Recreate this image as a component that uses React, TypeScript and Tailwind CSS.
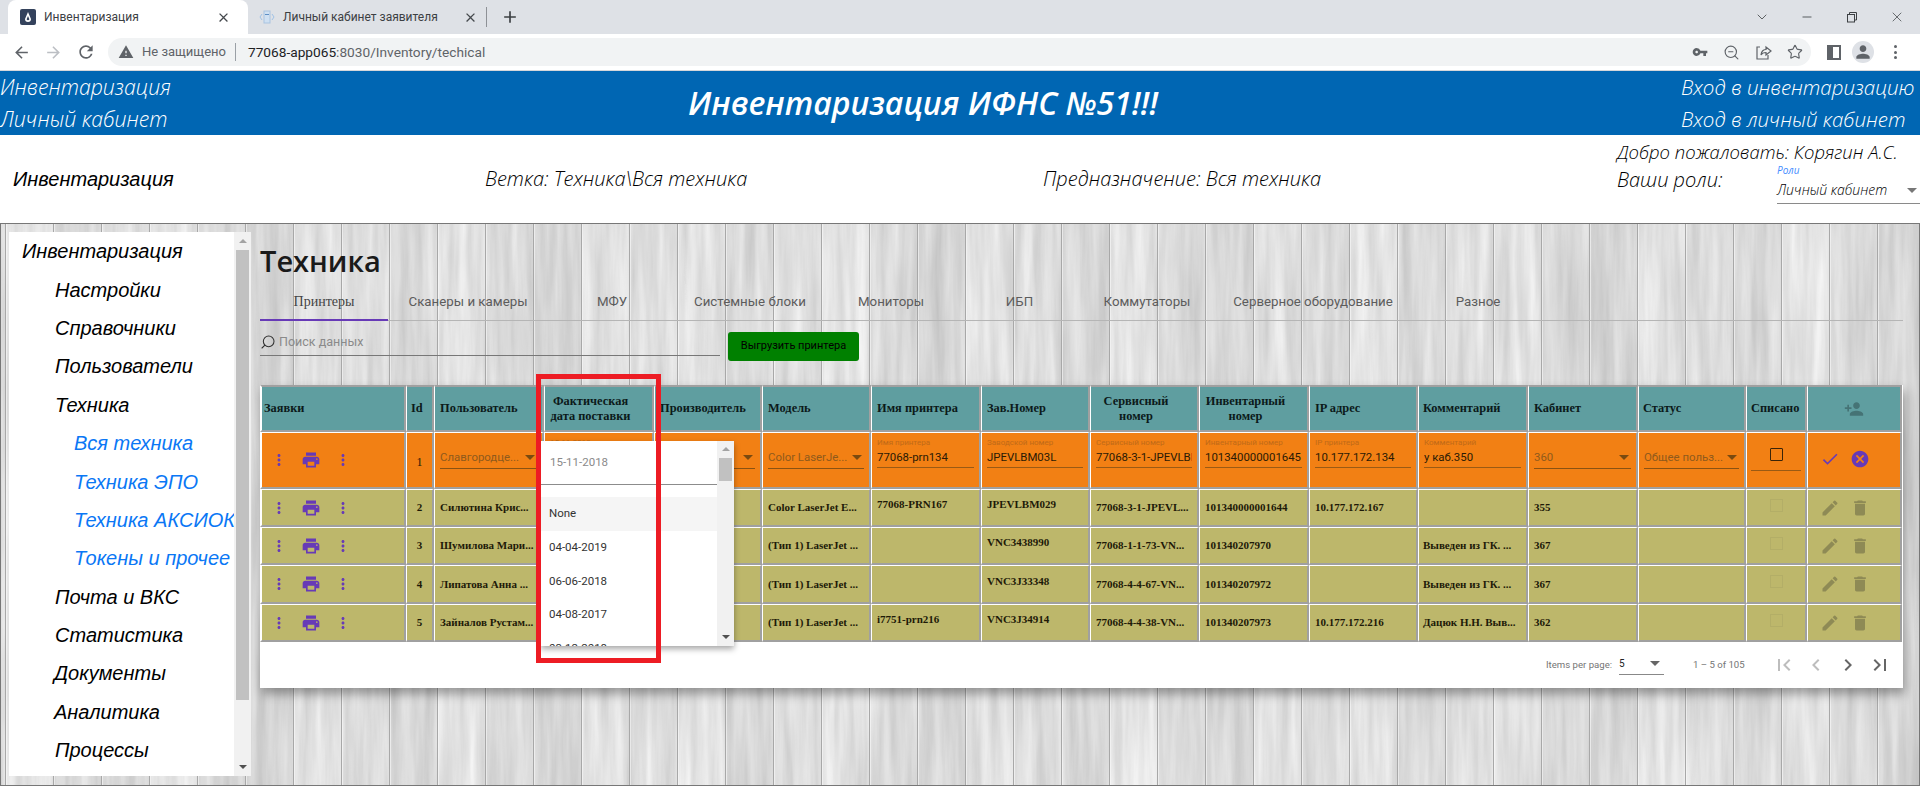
import React from "react";
import {
  MdPrint, MdMoreVert, MdCheck, MdCancel, MdEdit, MdDelete, MdPersonAdd, MdFirstPage, MdLastPage,
  MdChevronLeft, MdChevronRight, MdArrowBack, MdArrowForward, MdRefresh, MdWarning, MdVpnKey, MdClose, MdAdd, MdPerson,
} from "react-icons/md";
import { Search, ZoomOut, Star, ChevronDown, Minus, X } from "lucide-react";

const widths = [146, 28, 110, 110, 108, 109, 110, 109, 109, 110, 109, 110, 110, 108, 61, 95];

function Wood() {
  const planks = Array.from({ length: 41 }, (_, i) => i);
  const shade = [0.05, 0.0, 0.07, 0.03, 0.0, 0.06, 0.1, 0.02, 0.04, 0.08, 0.0, 0.05, 0.09, 0.01];
  return (
    <svg className="absolute inset-0 h-full w-full" width="1920" height="563" aria-hidden="true">
      <defs>
        <filter id="grain" x="0" y="0" width="100%" height="100%" colorInterpolationFilters="sRGB">
          <feTurbulence type="fractalNoise" baseFrequency="0.09 0.006" numOctaves="4" seed="7" />
          <feColorMatrix values="0.2 0 0 0 0.79  0.2 0 0 0 0.79  0.2 0 0 0 0.79  0 0 0 0 1" />
        </filter>
      </defs>
      <rect width="1920" height="563" filter="url(#grain)" />
      {planks.map((i) => (
        <rect key={i} x={4 + (i - 1) * 48} y="0" width="48" height="563" fill="#000" opacity={shade[i % shade.length] * 0.6} />
      ))}
      {planks.map((i) => (
        <g key={i}>
          <rect x={4 + i * 48} y="0" width="1" height="563" fill="#a8a8a8" />
          <rect x={5 + i * 48} y="0" width="1" height="563" fill="#f8f8f8" opacity="0.6" />
        </g>
      ))}
    </svg>
  );
}

function TabStrip() {
  return (
    <div className="flex h-[34px] items-end bg-[#dee1e6] pl-2 font-['Roboto',sans-serif] text-[12px] text-[#3c4043]">
      <div className="flex h-[34px] w-[240px] items-center rounded-t-[8px] bg-white pl-3">
        <span className="flex h-4 w-4 items-center justify-center rounded-[2px] bg-[#34425c]">
          <svg width="10" height="12" viewBox="0 0 10 12"><path d="M5 1 L8 8 A3 3 0 0 1 2 8 Z M5 5 L3.6 8.2 A1.5 1.5 0 0 0 6.4 8.2 Z" fill="#fff" fillRule="evenodd" /></svg>
        </span>
        <span className="ml-2 w-[172px]">Инвентаризация</span>
        <MdClose className="h-[15px] w-[15px] text-[#45494d]" />
      </div>
      <div className="flex h-[34px] items-center pl-[11px]">
        <svg width="16" height="16" viewBox="0 0 16 16">
          <path d="M3 5 L1 8 L3 11 M13 5 L15 8 L13 11" stroke="#9fc2e6" strokeWidth="1" fill="none" />
          <rect x="5" y="2" width="6" height="12" fill="#cfe0f2" stroke="#a9c4e0" />
          <rect x="6" y="5" width="4" height="1" fill="#5f8fc4" />
        </svg>
        <span className="ml-2 w-[180px]">Личный кабинет заявителя</span>
        <MdClose className="h-[15px] w-[15px] text-[#45494d]" />
        <span className="ml-[8px] h-[20px] w-px bg-[#8e9196]" />
        <MdAdd className="ml-[13px] h-[20px] w-[20px] text-[#3c4043]" />
      </div>
      <div className="ml-auto flex h-[34px] items-center text-[#3c4043]">
        <ChevronDown className="h-4 w-4" strokeWidth={1.2} />
        <Minus className="ml-[30px] h-[14px] w-[14px]" strokeWidth={1.4} />
        <svg className="ml-[32px]" width="12" height="12" viewBox="0 0 12 12" fill="none" stroke="#3c4043">
          <rect x="1.5" y="3.5" width="7" height="7.5" /><path d="M3.5 3.5 V1.5 H10.5 V9 H8.5" />
        </svg>
        <X className="ml-[31px] mr-[15px] h-[16px] w-[16px]" strokeWidth={1.1} />
      </div>
    </div>
  );
}

function Toolbar() {
  return (
    <div className="flex h-[37px] items-center border-b border-[#d5d7db] bg-white pl-[12px] font-['Roboto',sans-serif]">
      <MdArrowBack className="h-[19px] w-[19px] text-[#5f6368]" />
      <MdArrowForward className="ml-[13px] h-[19px] w-[19px] text-[#bcbfc4]" />
      <MdRefresh className="ml-[13px] h-[20px] w-[20px] text-[#5f6368]" />
      <div className="ml-[12px] flex h-[28px] w-[1703px] items-center rounded-full bg-[#f1f3f4] pl-[10px] text-[13px]">
        <MdWarning className="h-[16px] w-[16px] text-[#5f6368]" />
        <span className="ml-[8px] text-[#5f6368]">Не защищено</span>
        <span className="ml-[9px] h-[18px] w-px bg-[#9aa0a6]" />
        <span className="ml-[12px] text-[13.7px] text-[#202124]">77068-app065<span className="text-[#5f6368]">:8030/Inventory/techical</span></span>
        <div className="ml-auto flex items-center text-[#5f6368]">
          <MdVpnKey className="h-[16px] w-[16px]" />
          <ZoomOut className="ml-[15px] h-[17px] w-[17px]" strokeWidth={1.6} />
          <svg className="ml-[15px]" width="17" height="17" viewBox="0 0 17 17" fill="none" stroke="#5f6368" strokeWidth="1.2">
            <path d="M5 3 H2 V15 H13 V11" /><path d="M6 11 C6 7 9 5.5 11 5.5 V3 L16 7 L11 11 V8.5 C9 8.5 7 9 6 11 Z" />
          </svg>
          <Star className="ml-[15px] mr-[8px] h-[16px] w-[16px]" strokeWidth={1.7} />
        </div>
      </div>
      <span className="ml-[16px] flex h-[15px] w-[14px] justify-end border-2 border-[#5f6368] bg-[#5f6368]"><span className="h-full w-[6px] bg-white" /></span>
      <span className="ml-[11px] flex h-[22px] w-[22px] items-center justify-center rounded-full bg-[#dee1e6]">
        <MdPerson className="h-[20px] w-[20px] text-[#5f6368]" />
      </span>
      <span className="ml-[20px] flex flex-col gap-[2.5px]">
        <i className="h-[3px] w-[3px] rounded-full bg-[#5f6368]" />
        <i className="h-[3px] w-[3px] rounded-full bg-[#5f6368]" />
        <i className="h-[3px] w-[3px] rounded-full bg-[#5f6368]" />
      </span>
    </div>
  );
}

function BlueHeader() {
  return (
    <div className="flex h-[64px] items-center bg-[#0066b3] font-['Open_Sans',sans-serif] italic text-white">
      <div className="w-[300px] shrink-0 text-[21.3px] font-light leading-[32px]">
        <div>Инвентаризация</div>
        <div>Личный кабинет</div>
      </div>
      <div className="ml-[388px] whitespace-nowrap text-[32px] font-semibold leading-none">Инвентаризация ИФНС №51!!!</div>
      <div className="ml-auto w-[239px] shrink-0 whitespace-nowrap text-[20.5px] font-light leading-[32px]">
        <div>Вход в инвентаризацию</div>
        <div>Вход в личный кабинет</div>
      </div>
    </div>
  );
}

function InfoBar() {
  return (
    <div className="flex h-[88px] items-center bg-white font-['Open_Sans',sans-serif] text-[20px] font-light italic text-black">
      <div className="w-[485px] shrink-0 pl-[13px] font-['Liberation_Sans',sans-serif] text-[20px] font-normal">Инвентаризация</div>
      <div className="w-[558px] shrink-0">Ветка: Техника\Вся техника</div>
      <div className="w-[574px] shrink-0">Предназначение: Вся техника</div>
      <div className="relative h-full w-[303px] shrink-0 whitespace-nowrap">
        <div className="pt-[3px] text-[18.5px] leading-[28px]">Добро пожаловать: Корягин А.С.</div>
        <div className="leading-[28px]">Ваши роли:</div>
        <div className="absolute left-[160px] top-[29px] w-[143px]">
          <div className="text-[10px] font-normal leading-[12px] text-[#3f8cff]">Роли</div>
          <div className="mt-[4px] flex h-[24px] items-start border-b border-[#8a8a8a] text-[14px] leading-[20px]">
            Личный кабинет
            <span className="ml-auto mr-[3px] mt-[8px] h-0 w-0 border-x-[5px] border-t-[5px] border-x-transparent border-t-[#777]" />
          </div>
        </div>
      </div>
    </div>
  );
}

function Sidebar() {
  const items: [string, string, string][] = [
    ["Инвентаризация", "ml-[13px]", "text-black"],
    ["Настройки", "ml-[46px]", "text-black"],
    ["Справочники", "ml-[46px]", "text-black"],
    ["Пользователи", "ml-[46px]", "text-black"],
    ["Техника", "ml-[46px]", "text-black"],
    ["Вся техника", "ml-[65px]", "text-[#0a77f5]"],
    ["Техника ЭПО", "ml-[65px]", "text-[#0a77f5]"],
    ["Техника АКСИОК", "ml-[65px]", "text-[#0a77f5]"],
    ["Токены и прочее", "ml-[65px]", "text-[#0a77f5]"],
    ["Почта и ВКС", "ml-[46px]", "text-black"],
    ["Статистика", "ml-[46px]", "text-black"],
    ["Документы", "ml-[45px]", "text-black"],
    ["Аналитика", "ml-[45px]", "text-black"],
    ["Процессы", "ml-[46px]", "text-black"],
  ];
  return (
    <div className="relative flex h-[544px] w-[242px] shrink-0">
      <div className="w-[225px] overflow-hidden whitespace-nowrap bg-white font-['Liberation_Sans',sans-serif] text-[20px] italic">
        {items.map(([t, m, c]) => (
          <div key={t} className={`flex h-[38.4px] items-center ${m} ${c}`}>{t}</div>
        ))}
      </div>
      <div className="flex w-[17px] flex-col items-center bg-[#f1f1f1]">
        <span className="mt-[7px] h-0 w-0 border-x-[4px] border-b-[4px] border-x-transparent border-b-[#a3a3a3]" />
        <span className="mt-[7px] h-[450px] w-[13px] bg-[#c1c1c1]" />
        <span className="mb-[7px] mt-auto h-0 w-0 border-x-[4px] border-t-[4px] border-x-transparent border-t-[#505050]" />
      </div>
    </div>
  );
}

function Tabs() {
  const tabs: [string, string][] = [
    ["Принтеры", "w-[128px]"], ["Сканеры и камеры", "w-[160px]"], ["МФУ", "w-[128px]"], ["Системные блоки", "w-[148px]"],
    ["Мониторы", "w-[134px]"], ["ИБП", "w-[123px]"], ["Коммутаторы", "w-[132px]"], ["Серверное оборудование", "w-[200px]"], ["Разное", "w-[130px]"],
  ];
  return (
    <div className="flex h-[50px] border-b border-[#b5b5b5] font-['Roboto',sans-serif] text-[13.3px] text-[#5c5c5c]">
      {tabs.map(([t, w], i) => (
        <div
          key={t}
          className={`flex h-[50px] shrink-0 items-center justify-center whitespace-nowrap pt-[12px] ${w} ${
            i === 0 ? "border-b-2 border-[#673ab7] font-['Liberation_Serif',serif] text-[14px] font-medium text-[#444]" : ""
          }`}
        >
          {t}
        </div>
      ))}
    </div>
  );
}

function Caret({ color = "#7a4a10" }: { color?: string }) {
  return <span className="block h-0 w-0 shrink-0 border-x-[5px] border-t-[5px] border-x-transparent" style={{ borderTopColor: color }} />;
}

function Field({ label, value }: { label: string; value: string }) {
  return (
    <div className="mx-[5px] pt-[5px] font-['Roboto',sans-serif] font-normal">
      <div className="h-[9px] overflow-hidden whitespace-nowrap text-[8px] leading-[9px] text-[#c06a18]">{label}</div>
      <div className="mt-[3px] h-[18px] overflow-hidden whitespace-nowrap border-b border-[#9a5a14] text-[11.4px] leading-[15px] text-[#2a1a05]">{value}</div>
    </div>
  );
}

function SelectField({ value }: { value: string }) {
  return (
    <div className="mx-[5px] pt-[17px] font-['Roboto',sans-serif] font-normal">
      <div className="flex h-[19px] items-start justify-between whitespace-nowrap border-b border-[#8a5212] text-[11.4px] leading-[15px] text-[#8f5a1c]">
        <span>{value}</span>
        <span className="mr-[2px] mt-[5px]"><Caret /></span>
      </div>
    </div>
  );
}

function RowTools() {
  return (
    <div className="flex items-center pl-[8px] text-[#673ab7]">
      <MdMoreVert className="h-[18px] w-[18px]" />
      <MdPrint className="ml-[13px] h-[20px] w-[20px]" />
      <MdMoreVert className="ml-[13px] h-[18px] w-[18px]" />
    </div>
  );
}

type Row = { id: number; user: string; model: string; name: string; serial: string; service: string; inv: string; ip: string; note: string; room: string; h: string };

const rows: Row[] = [
  { id: 2, user: "Силютина Крис...", model: "Color LaserJet E...", name: "77068-PRN167", serial: "JPEVLBM029", service: "77068-3-1-JPEVL...", inv: "101340000001644", ip: "10.177.172.167", note: "", room: "355", h: "h-[38px]" },
  { id: 3, user: "Шумилова Мари...", model: "(Тип 1) LaserJet ...", name: "", serial: "VNC3438990", service: "77068-1-1-73-VN...", inv: "101340207970", ip: "", note: "Выведен из ГК. ...", room: "367", h: "h-[38px]" },
  { id: 4, user: "Липатова Анна ...", model: "(Тип 1) LaserJet ...", name: "", serial: "VNC3J33348", service: "77068-4-4-67-VN...", inv: "101340207972", ip: "", note: "Выведен из ГК. ...", room: "367", h: "h-[39px]" },
  { id: 5, user: "Зайналов Рустам...", model: "(Тип 1) LaserJet ...", name: "i7751-prn216", serial: "VNC3J34914", service: "77068-4-4-38-VN...", inv: "101340207973", ip: "10.177.172.216", note: "Дацюк Н.Н. Выв...", room: "362", h: "h-[38px]" },
];

const th = "border-y-2 border-r-2 border-l border-y-[#a0a0a0] border-r-[#a0a0a0] border-l-white bg-[#5f9ea0] p-0 align-middle font-bold text-[#0c1a1a]";
const orange = "border-b-2 border-t border-r-2 border-l border-b-[#a0a0a0] border-t-white border-r-[#a0a0a0] border-l-white bg-[#f28014] p-0 align-top";
const olive = "border-b-2 border-t border-r-2 border-l border-b-[#a0a0a0] border-t-white border-r-[#a0a0a0] border-l-white bg-[#bdb76b] p-0 align-middle whitespace-nowrap overflow-hidden";

function Plain({ children }: { children: React.ReactNode }) {
  return <td className={olive}><div className="pl-[5px]">{children}</div></td>;
}
function High({ children }: { children: React.ReactNode }) {
  return <td className={olive}><div className="pb-[6px] pl-[5px]">{children}</div></td>;
}

function DataTable() {
  return (
    <table className="w-[1642px] table-fixed border-separate border-spacing-0 font-['Liberation_Serif',serif] text-[11px] font-bold text-[#1e1a08]">
      <colgroup>{widths.map((w, i) => <col key={i} style={{ width: w }} />)}</colgroup>
      <thead className="text-[12.4px] leading-[15px]">
        <tr className="h-[47px]">
          <th className={`${th} border-l-2 border-l-[#a0a0a0] pl-[2px] text-left`}>Заявки</th>
          <th className={`${th} pl-[4px] text-left`}>Id</th>
          <th className={`${th} pl-[5px] text-left`}>Пользователь</th>
          <th className={`${th} pr-4 text-center`}>Фактическая<br />дата поставки</th>
          <th className={`${th} pl-[5px] text-left`}>Производитель</th>
          <th className={`${th} pl-[5px] text-left`}>Модель</th>
          <th className={`${th} pl-[5px] text-left`}>Имя принтера</th>
          <th className={`${th} pl-[5px] text-left`}>Зав.Номер</th>
          <th className={`${th} pr-4 text-center`}>Сервисный<br />номер</th>
          <th className={`${th} pr-4 text-center`}>Инвентарный<br />номер</th>
          <th className={`${th} pl-[5px] text-left`}>IP адрес</th>
          <th className={`${th} pl-[4px] text-left`}>Комментарий</th>
          <th className={`${th} pl-[5px] text-left`}>Кабинет</th>
          <th className={`${th} pl-[4px] text-left`}>Статус</th>
          <th className={`${th} pl-[4px] text-left`}>Списано</th>
          <th className={th}><div className="flex justify-center"><MdPersonAdd className="h-[20px] w-[20px] text-[#457375]" /></div></th>
        </tr>
      </thead>
      <tbody>
        <tr className="h-[57px]">
          <td className={`${orange} border-l-2 border-l-[#a0a0a0]`}><div className="pt-[17px]"><RowTools /></div></td>
          <td className={`${orange} pt-[20px] text-center text-[12px] font-normal`}>1</td>
          <td className={orange}><SelectField value="Славгородце..." /></td>
          <td className={orange}><Field label="15-11-2018" value="" /></td>
          <td className={orange}><SelectField value="HP" /></td>
          <td className={orange}><SelectField value="Color LaserJe..." /></td>
          <td className={orange}><Field label="Имя принтера" value="77068-prn134" /></td>
          <td className={orange}><Field label="Заводской номер" value="JPEVLBM03L" /></td>
          <td className={orange}><Field label="Сервисный номер" value="77068-3-1-JPEVLBM03L" /></td>
          <td className={orange}><Field label="Инвентарный номер" value="101340000001645" /></td>
          <td className={orange}><Field label="IP принтера" value="10.177.172.134" /></td>
          <td className={orange}><Field label="Комментарий" value="у каб.350" /></td>
          <td className={orange}><SelectField value="360" /></td>
          <td className={orange}><SelectField value="Общее польз..." /></td>
          <td className={orange}>
            <div className="mx-[4px] flex h-[38px] justify-center border-b border-[#9a5a14] pt-[15px]">
              <span className="h-[13px] w-[13px] rounded-[1px] border border-[#3a2408]" />
            </div>
          </td>
          <td className={orange}>
            <div className="flex items-center pl-[12px] pt-[16px] text-[#673ab7]">
              <MdCheck className="h-[20px] w-[20px]" />
              <MdCancel className="ml-[10px] h-[20px] w-[20px]" />
            </div>
          </td>
        </tr>
        {rows.map((r) => (
          <tr key={r.id} className={r.h}>
            <td className={`${olive} border-l-2 border-l-[#a0a0a0]`}><RowTools /></td>
            <td className={`${olive} text-center`}>{r.id}</td>
            <Plain>{r.user}</Plain>
            <td className={olive} />
            <td className={olive} />
            <Plain>{r.model}</Plain>
            <High>{r.name}</High>
            <High>{r.serial}</High>
            <Plain>{r.service}</Plain>
            <Plain>{r.inv}</Plain>
            <Plain>{r.ip}</Plain>
            <td className={olive}><div className="pl-[4px]">{r.note}</div></td>
            <Plain>{r.room}</Plain>
            <td className={olive} />
            <td className={olive}>
              <div className="flex justify-center pb-[5px]"><span className="h-[13px] w-[13px] border border-[#b0ab66] opacity-80" /></div>
            </td>
            <td className={olive}>
              <div className="flex items-center pl-[12px] text-[#8e8a55]">
                <MdEdit className="h-[20px] w-[20px]" />
                <MdDelete className="ml-[10px] h-[20px] w-[20px]" />
              </div>
            </td>
          </tr>
        ))}
      </tbody>
    </table>
  );
}

function Paginator() {
  return (
    <div className="flex h-[46px] items-center whitespace-nowrap font-['Roboto',sans-serif] text-[9.6px] text-[#757575]">
      <span className="ml-[1286px] w-[66px] shrink-0">Items per page:</span>
      <div className="mb-[13px] ml-[7px] flex h-[20px] w-[45px] shrink-0 items-center justify-between self-end border-b border-[#888] pb-[3px] text-[10px] text-[#222]">
        <span>5</span>
        <span className="mr-[4px]"><Caret color="#666" /></span>
      </div>
      <span className="ml-[29px] w-[50px] shrink-0">1 – 5 of 105</span>
      <div className="ml-[29px] flex shrink-0 items-center">
        <MdFirstPage className="h-[24px] w-[24px] text-[#bdbdbd]" />
        <MdChevronLeft className="ml-[8px] h-[24px] w-[24px] text-[#bdbdbd]" />
        <MdChevronRight className="ml-[8px] h-[24px] w-[24px] text-[#666]" />
        <MdLastPage className="ml-[8px] h-[24px] w-[24px] text-[#666]" />
      </div>
    </div>
  );
}

function DatePopup() {
  const dates = ["04-04-2019", "06-06-2018", "04-08-2017", "03-12-2018"];
  return (
    <div className="absolute left-[281px] top-[56px] flex h-[205px] w-[193px] overflow-hidden bg-white font-['Roboto',sans-serif] text-[11.5px] text-[#333] shadow-[0_3px_6px_rgba(0,0,0,0.35)]">
      <div className="w-[176px] shrink-0">
        <div className="flex h-[44px] items-center border-b border-[#8c8c8c] pl-[9px] text-[#8a8a8a]">15-11-2018</div>
        <div className="mt-[12px] flex h-[34px] items-center bg-[#f5f5f5] pl-[8px]">None</div>
        {dates.map((d) => <div key={d} className="flex h-[33.6px] items-center pl-[8px]">{d}</div>)}
      </div>
      <div className="flex w-[17px] flex-col items-center bg-[#f1f1f1]">
        <span className="mt-[6px] h-0 w-0 border-x-[4px] border-b-[4px] border-x-transparent border-b-[#a3a3a3]" />
        <span className="mt-[7px] h-[23px] w-[13px] bg-[#c1c1c1]" />
        <span className="mb-[7px] mt-auto h-0 w-0 border-x-[4px] border-t-[4px] border-x-transparent border-t-[#505050]" />
      </div>
    </div>
  );
}

function Content() {
  return (
    <div className="relative ml-[9px] w-[1643px]">
      <h1 className="h-[39px] whitespace-nowrap pt-[9px] font-['Open_Sans',sans-serif] text-[29px] font-semibold leading-[40px] text-[#1a1a1a]">Техника</h1>
      <Tabs />
      <div className="flex items-start">
        <div className="flex h-[35px] w-[460px] items-center border-b border-[#777] pt-[8px] font-['Roboto',sans-serif] text-[12.5px] text-[#8a8a8a]">
          <Search className="h-[16px] w-[16px] -scale-x-100 text-[#333]" strokeWidth={1.6} />
          <span className="ml-[3px]">Поиск данных</span>
        </div>
        <button className="ml-[8px] mt-[11px] h-[29px] w-[131px] rounded-[3px] bg-[#008000] font-['Roboto',sans-serif] text-[11px] text-black">Выгрузить принтера</button>
      </div>
      <div className="relative mt-[24px] bg-white shadow-[2px_6px_10px_rgba(0,0,0,0.35)]">
        <DataTable />
        <Paginator />
        <DatePopup />
        <div className="absolute left-[276px] top-[-11px] h-[289px] w-[125px] border-[5px] border-[#ed1c24]" />
      </div>
    </div>
  );
}

export default function App() {
  return (
    <div className="flex h-[786px] w-[1920px] flex-col overflow-hidden bg-white">
      <TabStrip />
      <Toolbar />
      <BlueHeader />
      <InfoBar />
      <main className="relative flex min-h-0 flex-1 border border-[#777] pl-[8px] pt-[8px]">
        <Wood />
        <Sidebar />
        <Content />
      </main>
    </div>
  );
}
